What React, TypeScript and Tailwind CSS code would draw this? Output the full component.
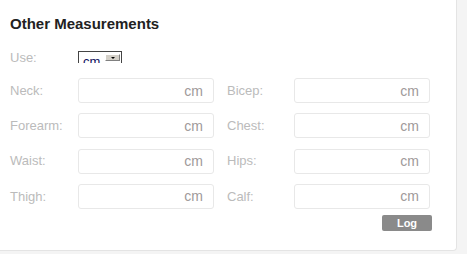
import React from "react";

const rows: [string, string][] = [
  ["Neck:", "Bicep:"],
  ["Forearm:", "Chest:"],
  ["Waist:", "Hips:"],
  ["Thigh:", "Calf:"],
];

function Field() {
  return (
    <div className="w-[136px] h-[25px] border border-[#e8e8e8] rounded-[3px] bg-white flex items-center justify-end pr-[10px]">
      <span className="text-[14px] text-[#a09a9a] leading-none">cm</span>
    </div>
  );
}

export default function App() {
  return (
    <div className="w-[467px] h-[254px] bg-[#f4f4f4] overflow-hidden font-['Liberation_Sans',Arial,sans-serif]">
      <div className="w-[457px] h-[251px] bg-white border-r border-b border-[#e4e4e4] rounded-br-[4px] pl-[10px] pt-[15px]">
        <h2 className="text-[15px] font-bold text-[#222] leading-[17px]">Other Measurements</h2>

        {/* unit select */}
        <div className="mt-[19px] flex items-center h-[12px]">
          <span className="w-[68px] text-[13px] leading-[15px] text-[#bbb]">Use:</span>
          <div className="relative w-[44px] h-[12px] overflow-hidden border border-b-0 border-[#444] bg-white">
            <span className="absolute left-[4px] top-[2px] text-[13px] leading-[15px] text-[#101060]">cm</span>
            <div className="absolute right-[1px] top-[2px] w-[15px] h-[7px] bg-[#d4d0c8] border border-[#808080] border-t-white border-l-white flex items-center justify-center">
              <div className="w-0 h-0 border-l-[2px] border-r-[2px] border-t-[2px] border-l-transparent border-r-transparent border-t-black" />
            </div>
          </div>
        </div>

        <div className="mt-[15px] flex flex-col gap-[10.33px]">
          {rows.map(([a, b]) => (
            <div key={a} className="flex items-center">
              <span className="w-[68px] text-[13px] text-[#bbb]">{a}</span>
              <Field />
              <span className="ml-[13px] w-[67px] text-[13px] text-[#bbb]">{b}</span>
              <Field />
            </div>
          ))}
        </div>

        <button className="mt-[6px] ml-[372px] w-[50px] h-[16px] bg-[#8a8a8a] rounded-[2px] text-white text-[11px] font-bold leading-[16px]">
          Log
        </button>
      </div>
    </div>
  );
}
